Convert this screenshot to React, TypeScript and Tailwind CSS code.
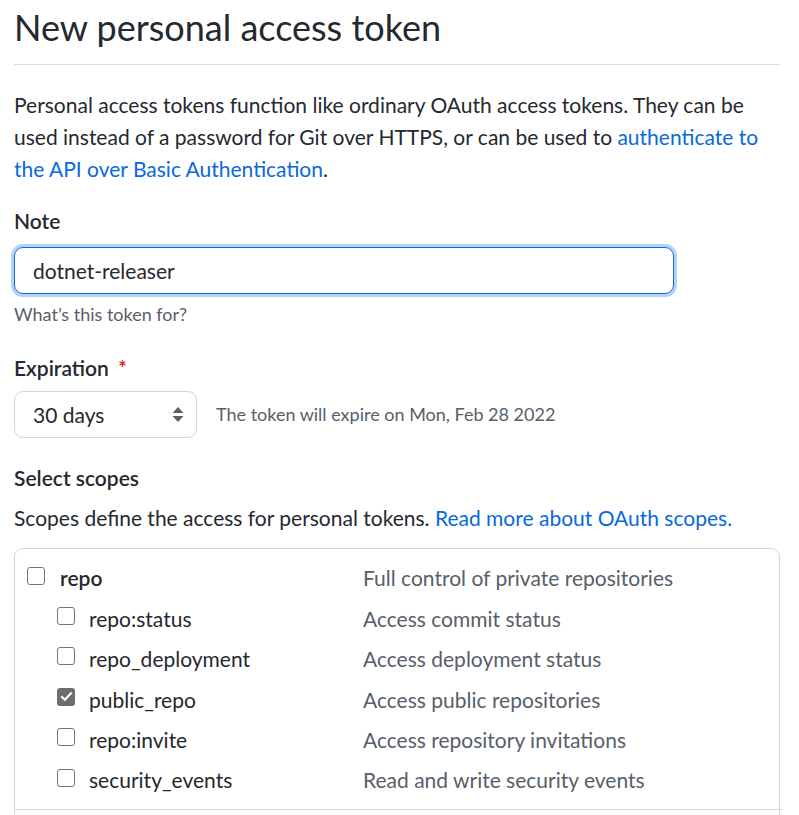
import React from 'react';

// Scope satırları: ad, açıklama, alt seviye mi, seçili mi
const scopes = [
    { name: 'repo', desc: 'Full control of private repositories', child: false, checked: false },
    { name: 'repo:status', desc: 'Access commit status', child: true, checked: false },
    { name: 'repo_deployment', desc: 'Access deployment status', child: true, checked: false },
    { name: 'public_repo', desc: 'Access public repositories', child: true, checked: true },
    { name: 'repo:invite', desc: 'Access repository invitations', child: true, checked: false },
    { name: 'security_events', desc: 'Read and write security events', child: true, checked: false },
];

const Checkbox = ({ checked }: { checked: boolean }) => {
    if (checked) {
        return (
            <span className="w-[18px] h-[18px] rounded-[3px] bg-[#6e6e6e] flex items-center justify-center shrink-0">
                <svg width="13" height="13" viewBox="0 0 16 16" fill="none">
                    <path d="M2.5 8.5l3.5 3.5 7.5-8" stroke="white" strokeWidth="2.6" strokeLinecap="square" />
                </svg>
            </span>
        );
    }
    return <span className="block w-[18px] h-[18px] rounded-[3px] border-[1.5px] border-[#767676] bg-white shrink-0" />;
};

export default function App() {
    return (
        <div className="bg-white min-h-screen font-[Lato,sans-serif] text-[#24292f] pl-[14px] pr-[19px]">
            {/* Başlık */}
            <div className="pt-[5px] pb-[14px] border-b border-[#d8dee4]">
                <h2 className="text-[36px] leading-[45px] font-normal">New personal access token</h2>
            </div>

            <p className="mt-[24px] text-[21px] leading-[32px]">
                Personal access tokens function like ordinary OAuth access tokens. They can be used instead of a password for Git over HTTPS, or can be used to{' '}
                <a href="#" className="text-[#0969da]">authenticate to the API over Basic Authentication</a>.
            </p>

            {/* Note alanı */}
            <div className="mt-[20px]">
                <label className="block text-[21px] leading-[32px] font-semibold">Note</label>
                <div className="mt-[10px] w-[660px] h-[47px] rounded-[9px] border border-[#0969da] shadow-[0_0_0_3px_rgba(9,105,218,0.3)] flex items-center px-[18px] text-[21px]">
                    dotnet-releaser
                </div>
                <p className="mt-[8px] text-[18px] leading-[24px] text-[#57606a]">What’s this token for?</p>
            </div>

            {/* Expiration */}
            <div className="mt-[26px]">
                <label className="block text-[21px] leading-[32px] font-semibold">
                    Expiration <span className="text-[#cf222e] ml-[4px]">*</span>
                </label>
                <div className="mt-[7px] flex items-center">
                    <div className="w-[183px] h-[47px] rounded-[9px] border border-[#d0d7de] flex items-center justify-between pl-[18px] pr-[12px] text-[21px]">
                        <span>30 days</span>
                        <svg width="12" height="15" viewBox="0 0 12 15" fill="#57606a">
                            <path d="M6 0L11.5 6H0.5z" />
                            <path d="M6 15L0.5 9H11.5z" />
                        </svg>
                    </div>
                    <span className="ml-[19px] text-[18px] text-[#57606a]">The token will expire on Mon, Feb 28 2022</span>
                </div>
            </div>

            {/* Scope seçimi */}
            <div className="mt-[24px]">
                <h3 className="text-[21px] leading-[32px] font-semibold">Select scopes</h3>
                <p className="mt-[8px] text-[21px] leading-[32px]">
                    Scopes define the access for personal tokens.{' '}
                    <a href="#" className="text-[#0969da]">Read more about OAuth scopes.</a>
                </p>

                <div className="mt-[14px] w-[766px] border border-[#d0d7de] border-b-0 rounded-t-[9px]">
                    <div className="pt-[9px] pb-[9px]">
                        {scopes.map((s) => (
                            <div key={s.name} className="h-[40.4px] flex items-center text-[21px]">
                                <div className={`w-[348px] flex items-center ${s.child ? 'pl-[42px]' : 'pl-[12px]'}`}>
                                    <span className="-mt-[5px]"><Checkbox checked={s.checked} /></span>
                                    <span className={s.child ? 'ml-[14px]' : 'ml-[15px] font-semibold'}>{s.name}</span>
                                </div>
                                <span className="text-[#57606a]">{s.desc}</span>
                            </div>
                        ))}
                    </div>
                    <div className="border-t border-[#d0d7de] -mr-[3px]" />
                    <div className="h-[40px]" />
                </div>
            </div>
        </div>
    );
}
